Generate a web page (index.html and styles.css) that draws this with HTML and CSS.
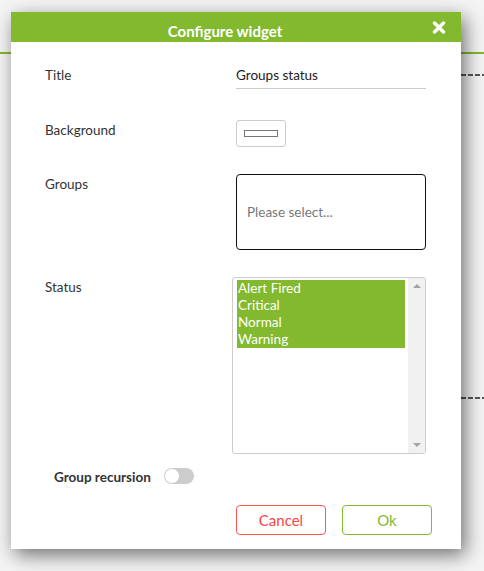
FILE: index.html
```html
<!DOCTYPE html>
<html>
<head>
<meta charset="utf-8">
<link rel="stylesheet" href="styles.css">
</head>
<body>
<div class="page">
  <div class="topbar"></div>
  <div class="widget">
    <div class="dash"></div>
    <div class="widget-body"></div>
    <div class="dash"></div>
  </div>
</div>

<div class="dialog">
  <div class="header">
    <span class="header-title">Configure widget</span>
    <span class="close">
      <svg width="14" height="13" viewBox="0 0 14 13"><path d="M2.5 2 L11.5 11 M11.5 2 L2.5 11" stroke="#fff" stroke-width="3.4" stroke-linecap="round"/></svg>
    </span>
  </div>
  <div class="content">
    <div class="row row-title">
      <div class="label label-title">Title</div>
      <div class="text-input">Groups status</div>
    </div>
    <div class="row row-bg">
      <div class="label">Background</div>
      <div class="color-btn"><span class="swatch"></span></div>
    </div>
    <div class="row row-groups">
      <div class="label">Groups</div>
      <div class="groups-box">Please select...</div>
    </div>
    <div class="row row-status">
      <div class="label label-status">Status</div>
      <div class="listbox">
        <div class="options">
          <div class="option">Alert Fired</div>
          <div class="option">Critical</div>
          <div class="option">Normal</div>
          <div class="option">Warning</div>
        </div>
        <div class="scrollbar">
          <span class="arrow-up"></span>
          <span class="arrow-down"></span>
        </div>
      </div>
    </div>
    <div class="row row-recursion">
      <div class="label-bold">Group recursion</div>
      <div class="toggle"><span class="knob"></span></div>
    </div>
    <div class="actions">
      <div class="btn btn-cancel">Cancel</div>
      <div class="btn btn-ok">Ok</div>
    </div>
  </div>
</div>
</body>
</html>
```

FILE: styles.css
```css
html, body {
  margin: 0;
  padding: 0;
}
body {
  width: 484px;
  height: 571px;
  overflow: hidden;
  background: #f4f4f4;
  font-family: Lato, "Open Sans", sans-serif;
  color: #333;
  position: relative;
}
.page {
  display: flex;
  flex-direction: column;
}
.topbar {
  height: 52px;
  border-bottom: 2px solid #82b92e;
}
.widget {
  margin-top: 20px;
  margin-left: 20px;
  width: 464px;
  display: flex;
  flex-direction: column;
}
.dash {
  height: 2px;
  background: repeating-linear-gradient(90deg, #555 0 5px, transparent 5px 7px);
}
.widget-body {
  height: 321px;
}

.dialog {
  position: absolute;
  left: 11px;
  top: 12px;
  width: 450px;
  height: 537px;
  background: #fff;
  box-shadow: 4px 6px 18px rgba(0, 0, 0, 0.55);
  display: flex;
  flex-direction: column;
}
.header {
  position: relative;
  height: 30px;
  background: #82b92e;
  overflow: hidden;
  box-sizing: border-box;
  padding: 10px 22px 0 0;
  text-align: center;
}
.header-title {
  color: #fff;
  font-weight: 700;
  font-size: 15px;
  line-height: 18px;
  display: block;
}
.close {
  position: absolute;
  left: 421px;
  top: 9px;
  width: 14px;
  height: 13px;
  display: block;
}
.close svg {
  display: block;
}
.content {
  padding: 0 0 0 34px;
  display: flex;
  flex-direction: column;
}
.row {
  display: flex;
  align-items: flex-start;
}
.label {
  width: 191px;
  font-size: 13.5px;
  line-height: 16px;
  padding-top: 2px;
  color: #333;
}
.row-title {
  margin-top: 22px;
}
.label-title {
  padding-top: 3px;
}
.text-input {
  width: 190px;
  height: 25px;
  box-sizing: border-box;
  border-bottom: 1px solid #ccc;
  font-size: 13.5px;
  line-height: 22px;
  color: #222;
}
.row-bg {
  margin-top: 31px;
}
.color-btn {
  width: 50px;
  height: 27px;
  box-sizing: border-box;
  border: 1px solid #ccc;
  border-radius: 3px;
  display: flex;
  align-items: center;
  justify-content: center;
}
.swatch {
  width: 34px;
  height: 7px;
  box-sizing: border-box;
  border: 1px solid #777;
  background: #fff;
}
.row-groups {
  margin-top: 27px;
}
.groups-box {
  width: 190px;
  height: 76px;
  box-sizing: border-box;
  border: 1px solid #111;
  border-radius: 4px;
  padding-left: 10px;
  display: flex;
  align-items: center;
  font-size: 13.5px;
  color: #777;
}
.row-status {
  margin-top: 27px;
}
.label-status {
  width: 187px;
}
.listbox {
  width: 194px;
  height: 177px;
  box-sizing: border-box;
  border: 1px solid #ccc;
  border-radius: 3px;
  display: flex;
  overflow: hidden;
}
.options {
  flex: 1;
  padding: 2px 3px 0 4px;
  display: flex;
  flex-direction: column;
}
.option {
  background: #82b92e;
  color: #fff;
  font-size: 13.5px;
  line-height: 17px;
  padding-left: 1px;
}
.scrollbar {
  width: 17px;
  background: #f1f1f1;
  display: flex;
  flex-direction: column;
  justify-content: space-between;
  align-items: center;
  padding: 6px 0;
}
.arrow-up, .arrow-down {
  width: 0;
  height: 0;
  border-left: 4px solid transparent;
  border-right: 4px solid transparent;
}
.arrow-up {
  border-bottom: 4px solid #a3a3a3;
}
.arrow-down {
  border-top: 4px solid #a3a3a3;
}
.row-recursion {
  margin-top: 14px;
  padding-left: 9px;
}
.label-bold {
  font-size: 13.5px;
  font-weight: 700;
  line-height: 17px;
  padding-top: 1px;
  color: #333;
  margin-right: 13px;
}
.toggle {
  width: 30px;
  height: 16px;
  border-radius: 8px;
  background: #ccc;
  display: flex;
  align-items: center;
  padding-left: 1px;
  box-sizing: border-box;
}
.knob {
  width: 14px;
  height: 14px;
  border-radius: 50%;
  background: #fff;
}
.actions {
  margin-top: 19px;
  display: flex;
  gap: 16px;
  padding-left: 191px;
}
.btn {
  width: 90px;
  height: 30px;
  box-sizing: border-box;
  border-radius: 4px;
  display: flex;
  align-items: center;
  justify-content: center;
  font-size: 15px;
  background: #fff;
}
.btn-cancel {
  border: 1px solid #f55;
  color: #f44;
}
.btn-ok {
  border: 1px solid #82b92e;
  color: #82b92e;
}
```
